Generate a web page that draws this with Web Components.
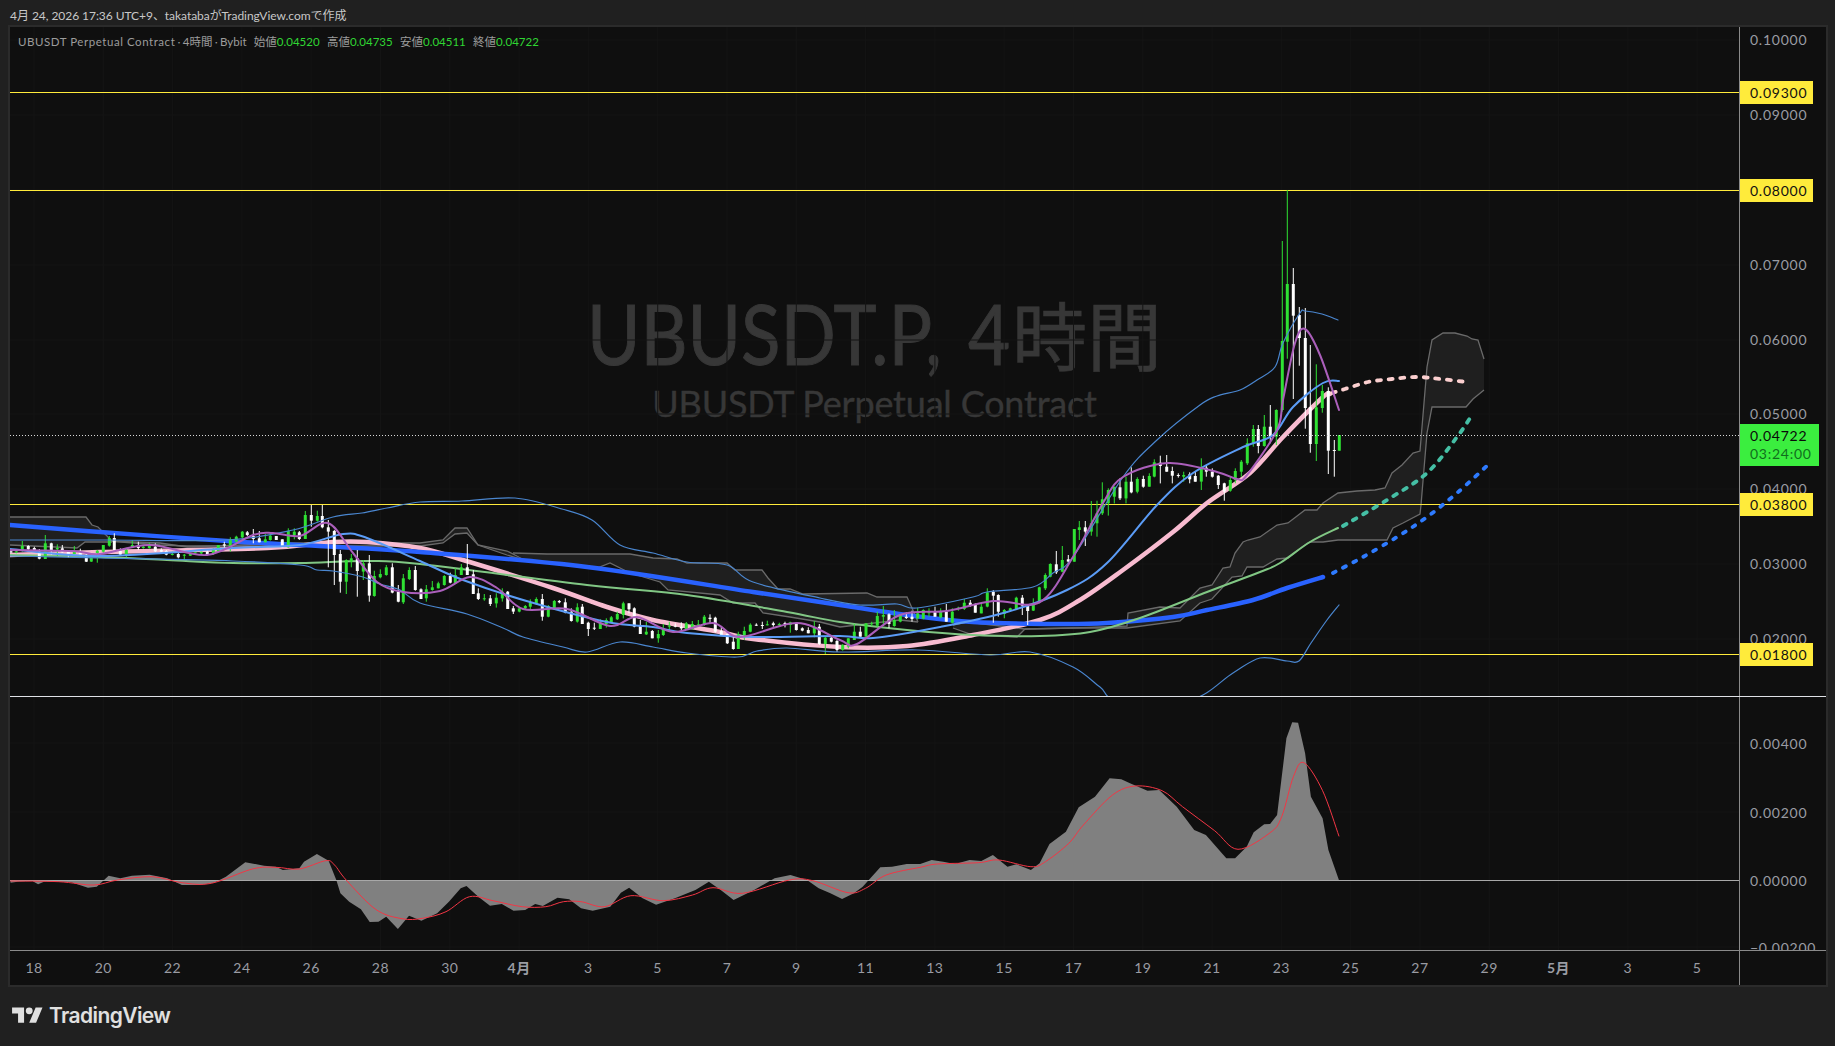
<!DOCTYPE html>
<html lang="ja">
<head>
<meta charset="utf-8">
<title>UBUSDT.P</title>
<style>
  html, body { margin: 0; padding: 0; background: #202020; overflow: hidden; }
</style>
</head>
<body>
<tv-snapshot>
  <tv-header slot="header">4月 24, 2026 17:36 UTC+9、takatabaがTradingView.comで作成</tv-header>
  <tv-chart slot="chart">
    <tv-main-pane slot="main"></tv-main-pane>
    <tv-price-axis slot="main-axis"
      ticks="40:0.10000,115:0.09000,190:0.08000,265:0.07000,340:0.06000,414:0.05000,489:0.04000,564:0.03000,639:0.02000"
      tags="92:0.09300,190:0.08000,504:0.03800,654:0.01800" origin="27"></tv-price-axis>
    <tv-osc-pane slot="osc"></tv-osc-pane>
    <tv-price-axis slot="osc-axis"
      ticks="744:0.00400,813:0.00200,881:0.00000,948:−0.00200" origin="697"></tv-price-axis>
    <tv-time-axis slot="time" labels="18,20,22,24,26,28,30,*4月,3,5,7,9,11,13,15,17,19,21,23,25,27,29,*5月,3,5"></tv-time-axis>
  </tv-chart>
  <tv-brand slot="footer">TradingView</tv-brand>
</tv-snapshot>

<script>
const FONT = `Lato, "Noto Sans CJK JP", sans-serif`;
const TICK_XS = Array.from({ length: 25 }, (_, i) => 34 + 69.3 * i);

// smooth line through hand-read points
function smooth(pts) {
  let d = `M${pts[0][0]} ${pts[0][1]}`;
  for (let i = 0; i < pts.length - 1; i++) {
    const p0 = pts[i - 1] || pts[i], p1 = pts[i], p2 = pts[i + 1], p3 = pts[i + 2] || p2;
    const c1x = p1[0] + (p2[0] - p0[0]) / 6, c1y = p1[1] + (p2[1] - p0[1]) / 6;
    const c2x = p2[0] - (p3[0] - p1[0]) / 6, c2y = p2[1] - (p3[1] - p1[1]) / 6;
    d += `C${c1x.toFixed(1)} ${c1y.toFixed(1)} ${c2x.toFixed(1)} ${c2y.toFixed(1)} ${p2[0]} ${p2[1]}`;
  }
  return d;
}
const straight = pts => "M" + pts.map(p => p.join(" ")).join("L");
const line = (pts, color, w, extra = "") =>
  `<path d="${smooth(pts)}" fill="none" stroke="${color}" stroke-width="${w}" stroke-linejoin="round" stroke-linecap="round" ${extra}/>`;

// zoom crop coords back to page coords
const unzoom = (pts, ox, oy, sx, sy = 3) => pts.map(([u, v]) => [+(ox + u / sx).toFixed(1), +(oy + v / sy).toFixed(1)]);

// side x bodyTop bodyBottom wickTop wickBottom, read from the crops, right to left
const CANDLES = [
  [1200, 170, `g 418 795 842 795 842;w 403 840 843 810 920;w 385 663 842 652 912;g 367 663 714 645 728;g 349 712 822 583 873;w 331 712 822 525 848;w 316 504 714 414 776;w 298 435 504 411 587;w 280 342 437 294 687;g 262 342 515 60 566;g 247 513 720 213 725;g 229 720 800 718 825;w 211 770 800 705 820;g 193 770 828 735 830;w 175 777 828 765 850;g 160 777 822 765 830;g 142 820 880 805 885;g 124 875 905 870 920;g 106 903 930 895 940;g 91 930 962 918 965;w 73 940 965 938 992;w 55 917 945 915 957;w 37 905 920 895 923;w 19 893 905 885 920`],
  [840, 440, `g 1084 85 125 55 150;w 1066 108 125 95 125;w 1049 103 118 97 130;g 1031 105 110 95 125;w 1015 105 108 100 113;w 997 93 107 80 130;w 980 80 95 45 95;w 961 68 78 47 130;g 943 67 110 58 112;g 928 108 140 100 140;w 910 117 140 107 143;g 892 117 155 112 160;w 874 125 157 82 160;g 858 125 175 110 190;w 840 142 175 115 180;g 823 140 170 140 190;g 805 150 190 145 227;g 787 178 220 127 225;g 771 220 250 182 290;g 754 250 275 183 287;w 736 262 275 243 318;g 718 262 270 243 300;g 703 267 365 267 365;w 685 358 365 345 372;g 667 360 395 318 397;w 649 373 397 333 402;g 631 372 410 370 412;g 616 405 445 400 450;g 598 442 485 440 490;g 580 490 512 475 513;w 563 495 513 495 555;w 547 473 497 465 525;g 529 473 508 470 510;g 511 505 512 503 515;g 493 510 522 507 535;w 475 465 515 463 530;w 460 455 467 450 548;g 442 457 500 445 502;g 424 500 520 490 520;w 406 495 518 490 518;w 391 488 497 480 500;g 373 488 507 477 510;g 355 503 507 500 512;g 337 515 548 505 550;w 319 515 545 492 545;g 302 515 532 505 535;w 285 515 530 500 530;g 267 517 520 505 530;g 250 510 536 508 538;g 233 520 535 503 538;w 216 530 537 512 545;w 199 530 534 517 537;g 181 523 545 523 547;g 163 540 558 510 560;w 147 523 552 520 565;g 130 525 530 498 552;g 112 528 557 515 560;g 95 550 553 545 558;g 78 550 590 550 592;w 61 575 590 560 590;g 43 575 600 552 600;g 25 595 620 595 625;g 8 615 630 612 632`],
  [420, 520, `w 1251 363 390 360 396;w 1234 353 365 350 367;g 1216 353 372 350 402;w 1198 320 372 312 375;g 1183 323 340 303 352;w 1165 330 340 322 340;w 1147 325 332 322 334;w 1129 310 330 307 332;g 1111 307 315 305 338;w 1095 309 312 305 322;g 1078 312 315 308 318;w 1060 310 315 305 320;g 1042 313 315 302 316;w 1027 315 318 305 327;w 1009 314 317 310 318;g 991 314 335 310 337;g 973 333 345 320 360;g 955 343 387 335 387;w 940 365 387 347 389;w 922 342 370 340 372;w 904 333 345 322 345;w 886 293 335 290 338;w 870 293 297 283 310;g 853 290 315 285 317;g 835 313 315 300 317;g 817 312 327 303 330;g 799 310 327 306 330;w 784 320 325 307 332;w 766 317 320 310 322;g 748 317 320 305 332;g 730 325 345 312 348;g 715 342 355 330 368;w 697 333 355 330 355;g 679 335 343 305 345;w 661 315 342 300 342;w 643 265 320 262 322;w 627 250 268 250 280;g 610 250 285 245 295;g 592 282 298 275 300;g 574 292 308 288 310;g 559 300 312 295 323;g 541 308 327 298 327;w 523 323 326 308 330;w 505 308 327 305 348;w 487 260 312 252 312;g 472 262 305 250 308;w 454 275 303 265 305;w 436 247 278 235 280;w 418 243 247 240 250;g 403 243 268 240 270;g 385 258 290 255 292;w 367 237 290 222 302;g 349 237 252 232 255;g 331 248 260 238 272;g 316 258 265 255 268;g 298 265 275 262 277;w 280 265 275 258 282;w 263 215 267 213 267;g 247 215 235 205 245;g 229 233 250 220 263;w 211 235 252 225 258;g 193 235 238 222 242;w 175 220 237 205 240;w 160 163 222 150 222;w 142 142 165 72 165;g 124 142 165 132 165;g 106 165 190 145 190;w 91 168 188 158 190;g 73 168 195 165 197;g 55 190 205 185 205;g 37 202 210 183 212;g 19 208 235 195 245;w 3 208 237 205 237`],
  [0, 480, `w 1246 270 330 258 332;g 1228 270 297 262 300;g 1210 295 367 282 372;w 1195 335 365 315 367;w 1177 262 338 250 340;g 1159 262 285 255 287;g 1141 282 292 268 295;g 1123 288 348 272 350;w 1108 250 347 225 365;g 1090 250 275 240 300;w 1072 235 273 210 350;g 1054 235 245 222 262;g 1039 240 305 238 342;w 1021 222 305 210 338;w 1003 153 225 150 315;w 985 142 155 120 262;w 967 108 142 75 145;g 952 108 122 92 125;w 934 105 122 75 140;g 916 105 177 93 177;w 898 157 177 153 180;g 883 155 165 145 178;g 865 153 202 145 203;w 847 178 202 178 202;w 829 168 180 168 180;g 811 167 180 160 182;g 796 178 187 162 187;w 778 175 187 153 187;w 760 168 177 147 190;w 742 157 165 153 168;g 727 155 172 153 174;g 709 170 185 167 187;g 691 177 207 172 215;w 673 193 197 185 207;g 655 195 213 195 215;g 640 208 222 205 225;w 622 215 224 208 226;g 604 215 220 215 222;g 586 217 220 217 224;g 571 222 227 220 228;g 553 224 227 222 240;w 535 222 232 218 235;g 517 222 224 215 226;w 499 213 224 210 226;w 484 210 215 205 216;w 466 200 214 190 216;g 448 198 204 188 206;g 430 200 204 198 206;w 415 196 204 185 210;g 397 195 202 180 204;g 379 210 228 203 232;w 361 213 224 205 228;w 343 174 210 160 210;g 328 174 197 168 200;g 310 195 215 195 218;g 292 212 219 210 248;g 274 226 245 222 246;w 259 224 245 218 246;w 241 216 227 206 228;g 223 215 222 198 222;w 205 214 222 210 233;w 187 205 217 195 218;g 172 204 208 193 228;w 154 190 210 188 225;g 136 190 237 165 237;w 118 215 236 207 238;w 103 204 212 200 216;w 85 198 208 196 212;g 67 198 210 183 215;g 49 214 218 210 220;w 33 214 218 212 218`]
];

const PINK = [[10,555],[100,552],[267,548],[333,542],[367,542],[420,548],[463,560],[553,588],[607,607],[653,620],[720,632],[753,639],[840,647],[907,646],[973,635],[1040,620],[1080,600],[1123,570],[1173,532],[1207,503],[1250,473],[1283,437],[1323,397],[1330,394]];
const PINK_DASH = [[1332,393],[1345,389],[1368,382],[1392,379],[1417,377],[1440,379],[1467,382]];
const BLUE = [[10,525],[100,532],[227,541],[300,545],[420,552],[587,567],[753,592],[840,605],[907,615],[973,622],[1057,624],[1107,623],[1173,617],[1207,610],[1253,600],[1287,588],[1323,577]];
const BLUE_DASH = [[1333,573],[1363,557],[1397,537],[1427,517],[1457,493],[1490,463]];
const GREEN = [[10,555],[100,557],[167,560],[233,563],[300,563],[367,561],[420,564],[587,585],[687,595],[787,612],[840,622],[907,630],[973,635],[1040,636],[1090,632],[1140,618],[1207,592],[1260,572],[1280,563],[1310,542],[1338,528]];
const TEAL_DASH = [[1343,526],[1387,500],[1427,473],[1457,437],[1472,415]];
const MID = [[10,549],[100,556],[233,548],[300,545],[343,534],[367,538],[420,561],[463,580],[530,602],[607,622],[653,627],[687,633],[753,637],[840,636],[873,638],[940,627],[1007,612],[1067,590],[1107,563],[1157,505],[1193,473],[1243,447],[1273,435],[1293,407],[1323,383],[1339,381]];
const UPPER = [[10,540],[107,540],[227,540],[293,530],[333,517],[362,513],[387,508],[420,502],[462,501],[515,498],[562,509],[592,520],[620,545],[653,553],[687,562],[727,565],[753,582],[820,598],[860,605],[897,604],[917,608],[973,597],[987,592],[1033,587],[1053,573],[1073,557],[1123,477],[1157,440],[1200,405],[1217,396],[1240,390],[1257,380],[1275,367],[1283,343],[1300,313],[1305,311],[1322,314],[1338,320]];
const LOWER = [[10,556],[100,558],[233,561],[300,565],[317,570],[333,571],[363,577],[380,584],[400,590],[420,603],[467,614],[503,628],[523,637],[563,647],[587,652],[620,642],[653,647],[687,653],[737,657],[757,651],[787,648],[840,652],[917,650],[990,655],[1030,652],[1073,667],[1100,687],[1118,700],[1190,700],[1233,673],[1260,658],[1287,661],[1299,661],[1311,643],[1327,620],[1339,605]];
const PURPLE = [[10,550],[73,551],[100,554],[150,545],[207,555],[253,535],[273,533],[300,536],[328,523],[353,553],[377,582],[403,592],[440,591],[470,577],[497,588],[523,609],[567,609],[610,626],[637,617],[673,632],[713,623],[740,637],[797,623],[840,640],[857,644],[900,615],[947,611],[993,601],[1040,602],[1073,557],[1103,503],[1123,477],[1168,463],[1217,472],[1237,479],[1247,475],[1277,430],[1283,400],[1295,343],[1305,329],[1320,355],[1339,410]];

// ichimoku cloud pieces: upper edge, lower edge
const CLOUDS = [
  [[[10,517],[86,517],[92,525],[98,527],[108,537],[112,542]], [[10,545],[77,548],[85,542],[112,542]]],
  [[[108,541],[160,543],[187,547],[290,543],[420,543],[443,540],[455,528],[467,528],[478,545],[507,551],[527,561]], [[108,541],[160,545],[187,546],[290,546],[420,546],[443,543],[455,534],[467,533],[478,545],[507,555],[527,561]]],
  [[[513,553],[547,554],[630,554],[653,558],[677,559],[687,563],[727,563],[735,570],[762,570],[768,578],[778,589],[790,589],[803,594],[867,593],[877,597],[907,597],[912,608],[918,622]], [[527,561],[597,568],[610,563],[630,573],[660,582],[668,590],[720,595],[733,603],[755,603],[763,613],[790,617],[820,622],[840,627],[900,620],[918,622]]],
  [[[953,625],[967,622],[1017,628],[1025,629]], [[953,628],[973,635],[1017,637],[1025,629]]],
  [[[1025,629],[1073,628],[1127,626],[1128,613],[1160,607],[1180,608],[1200,588],[1212,585],[1223,568],[1230,567],[1235,553],[1243,542],[1248,540],[1260,537],[1277,525],[1288,523],[1305,510],[1317,510],[1323,503],[1338,493],[1357,491],[1375,490],[1385,488],[1392,473],[1402,465],[1413,453],[1420,451],[1427,367],[1432,340],[1443,333],[1455,333],[1467,336],[1472,339],[1478,340],[1484,359]],
   [[1025,629],[1073,628],[1127,628],[1180,621],[1200,603],[1212,599],[1232,577],[1242,576],[1247,567],[1263,567],[1277,559],[1288,558],[1302,547],[1310,542],[1323,542],[1338,540],[1387,540],[1393,528],[1403,523],[1420,514],[1421,505],[1427,433],[1432,407],[1466,407],[1473,399],[1484,390]]]
];

const OSC_A = [[18,548],[30,545],[55,543],[65,553],[75,545],[120,546],[150,563],[165,560],[185,527],[205,535],[225,527],[255,524],[285,535],[310,555],[340,555],[365,548],[385,530],[418,487],[450,497],[470,500],[482,510],[510,505],[518,485],[540,462],[560,482],[573,540],[580,580],[595,605],[615,628],[630,666],[645,665],[658,650],[678,687],[697,647],[718,662],[745,640],[765,605],[785,565],[795,558],[815,590],[835,617],[855,612],[875,632],[895,630],[912,612],[925,618],[950,593],[970,598],[990,625],[1010,632],[1040,620],[1058,578],[1072,563],[1095,595],[1118,614],[1150,595],[1185,570],[1208,545],[1228,570],[1250,600],[1285,570],[1320,535],[1347,525],[1375,540],[1395,565],[1415,580],[1435,597],[1455,580],[1470,560],[1500,502],[1520,500],[1545,492],[1568,492]];
const OSC_B = [[20,480],[40,485],[60,492],[85,480],[105,483],[125,465],[150,500],[165,493],[190,510],[205,490],[222,432],[250,395],[272,322],[300,290],[325,235],[345,238],[360,250],[390,272],[410,270],[440,320],[470,390],[490,405],[525,475],[540,475],[560,440],[572,397],[590,373],[600,372],[612,345],[628,115],[638,67],[648,68],[660,160],[670,290],[690,355],[700,450],[718,540]];
const RED_A = [[18,543],[100,545],[160,555],[200,540],[260,530],[310,548],[360,550],[430,507],[470,502],[510,507],[555,482],[570,495],[590,540],[640,628],[685,656],[720,655],[760,635],[800,590],[840,602],[890,620],[930,620],[960,605],[990,605],[1030,620],[1075,587],[1130,602],[1180,585],[1215,563],[1265,580],[1345,540],[1385,542],[1445,578],[1475,565],[1510,525],[1568,502]];
const RED_B = [[30,492],[100,488],[135,480],[190,500],[215,485],[255,430],[280,375],[330,285],[370,258],[415,272],[450,320],[505,392],[545,448],[600,398],[620,350],[640,230],[658,188],[690,272],[718,408]];

class TvSnapshot extends HTMLElement {
  constructor() {
    super();
    this.attachShadow({ mode: "open" }).innerHTML = `
      <style>
        :host { display: grid; grid-template-rows: 25px auto 1fr; width: 1835px; height: 1046px; background: #202020; font-family: ${FONT}; }
        .chart { display: block; margin-left: 8px; }
      </style>
      <slot name="header"></slot>
      <div class="chart"><slot name="chart"></slot></div>
      <slot name="footer"></slot>`;
  }
}

class TvHeader extends HTMLElement {
  constructor() {
    super();
    this.attachShadow({ mode: "open" }).innerHTML = `
      <style>
        :host { display: flex; align-items: center; padding: 3px 0 0 10px; box-sizing: border-box; height: 25px; color: #c8c8c8; font-size: 12px; letter-spacing: -0.05px; white-space: nowrap; }
      </style>
      <slot></slot>`;
  }
}

class TvChart extends HTMLElement {
  constructor() {
    super();
    this.attachShadow({ mode: "open" }).innerHTML = `
      <style>
        :host { display: grid; grid-template-columns: 1729px 1px 86px; grid-template-rows: 669px 1px 253px 1px 34px; width: 1816px; border: 2px solid #2b2b2b; background: #0f0f0f; }
        .v { background: #8a8a8a; grid-column: 2; grid-row: 1 / 6; }
        .h1 { grid-column: 1 / 4; grid-row: 2; background: #dfe1e6; z-index: 1; }
        .h2 { grid-column: 1 / 4; grid-row: 4; background: #8a8a8a; z-index: 1; }
        ::slotted([slot=main]) { grid-column: 1; grid-row: 1; }
        ::slotted([slot=main-axis]) { grid-column: 3; grid-row: 1; }
        ::slotted([slot=osc]) { grid-column: 1; grid-row: 3; }
        ::slotted([slot=osc-axis]) { grid-column: 3; grid-row: 3; }
        ::slotted([slot=time]) { grid-column: 1; grid-row: 5; }
      </style>
      <div class="v"></div><div class="h1"></div><div class="h2"></div>
      <slot name="main"></slot><slot name="main-axis"></slot>
      <slot name="osc"></slot><slot name="osc-axis"></slot>
      <slot name="time"></slot>`;
  }
}

class TvMainPane extends HTMLElement {
  constructor() {
    super();
    this.attachShadow({ mode: "open" });
  }

  candles() {
    let out = "";
    for (const [ox, oy, rows] of CANDLES) {
      for (const row of rows.split(";")) {
        const [side, u, bt, bb, wt, wb] = row.split(" ");
        const x = ox + u / 3;
        const y = v => (oy + v / 3).toFixed(1);
        const c = side === "g" ? "#2fe233" : "#fff";
        out += `<rect x="${(x - 0.5).toFixed(1)}" y="${y(wt)}" width="1" height="${((wb - wt) / 3).toFixed(1)}" fill="${c}"/>`;
        out += `<rect x="${(x - 1.5).toFixed(1)}" y="${y(bt)}" width="3" height="${Math.max((bb - bt) / 3, 1).toFixed(1)}" fill="${c}"/>`;
      }
    }
    return out;
  }

  clouds() {
    return CLOUDS.map(([top, bottom]) => `
      <path d="${straight(top.concat([...bottom].reverse()))}Z" fill="#1f1f1f"/>
      <path d="${straight(top)}" fill="none" stroke="#6a6a6a" stroke-width="1.3"/>
      <path d="${straight(bottom)}" fill="none" stroke="#6a6a6a" stroke-width="1.3"/>`).join("");
  }

  connectedCallback() {
    const grid = TICK_XS.map(x => `<path d="M${x} 27V696" stroke="#141414"/>`).join("")
      + [40, 115, 190, 265, 340, 414, 489, 564, 639].map(y => `<path d="M10 ${y}H1739" stroke="#141414"/>`).join("");
    const levels = [92, 190, 504, 654].map(y => `<path d="M10 ${y}.5H1739" stroke="#ffeb3b" stroke-width="1"/>`).join("");
    this.shadowRoot.innerHTML = `
      <style>
        :host { display: block; position: relative; overflow: hidden; height: 669px; }
        svg { position: absolute; inset: 0; display: block; }
        .legend { position: absolute; left: 8px; top: 8px; z-index: 2; font-size: 11.5px; line-height: 14px; color: #9c9c9c; white-space: pre; word-spacing: -0.5px; }
        .legend b { font-weight: 400; color: #2fd633; }
        .legend .name { letter-spacing: 0.55px; word-spacing: 0; }
        .legend .sep { font-size: 7.5px; }
        .mark { position: absolute; left: 0; right: 0; top: 256px; text-align: center; color: #373737; white-space: nowrap; }
        .mark .a { display: flex; justify-content: center; align-items: baseline; font-size: 84px; line-height: 100px; }
        .mark .a .lat { display: block; width: 425px; transform: scaleX(0.866); transform-origin: 0 50%; white-space: pre; word-spacing: 9px; -webkit-text-stroke: 1px #373737; }
        .mark .a .cjk { font-size: 75px; -webkit-text-stroke: 0.6px #373737; }
        .mark .b { font-size: 36px; line-height: 44px; margin-top: -5px; letter-spacing: -0.2px; -webkit-text-stroke: 0.4px #373737; }
      </style>
      <div class="mark"><div class="a"><span class="lat">UBUSDT.P, 4</span><span class="cjk">時間</span></div><div class="b">UBUSDT Perpetual Contract</div></div>
      <svg width="1729" height="669" viewBox="10 27 1729 669">
        ${grid}
        ${this.clouds()}
        ${levels}
        ${line(PINK, "#f8bbd0", 4.5)}
        ${line(PINK_DASH, "#fbcfcf", 3.8, 'stroke-dasharray="4 7.7"')}
        ${line(BLUE, "#2962ff", 4.5)}
        ${line(BLUE_DASH, "#2e7bff", 3.8, 'stroke-dasharray="3 8.5"')}
        ${line(GREEN, "#81c784", 2)}
        ${line(TEAL_DASH, "#45bfa5", 3.8, 'stroke-dasharray="4 7.7"')}
        ${this.candles()}
        ${line(MID, "#5b9cf6", 2)}
        ${line(UPPER, "#4a86cf", 1.2)}
        ${line(LOWER, "#4a86cf", 1.2)}
        ${line(PURPLE, "#ab5fbb", 2)}
        <path d="M10 435.5H1739" stroke="#d8d8d8" stroke-dasharray="1 2"/>
      </svg>
      <div class="legend"><span class="name">UBUSDT Perpetual Contract</span><span class="sep">・</span>4時間<span class="sep">・</span>Bybit   始値<b>0.04520</b>   高値<b>0.04735</b>   安値<b>0.04511</b>   終値<b>0.04722</b></div>`;
  }
}

class TvOscPane extends HTMLElement {
  constructor() {
    super();
    this.attachShadow({ mode: "open" });
  }

  connectedCallback() {
    const a = unzoom(OSC_A, 0, 700, 1.704).concat(unzoom(OSC_B, 920, 700, 1.714));
    const red = unzoom(RED_A, 0, 700, 1.704).concat(unzoom(RED_B, 920, 700, 1.714));
    const grid = TICK_XS.map(x => `<path d="M${x} 697V950" stroke="#141414"/>`).join("")
      + [743, 812, 947].map(y => `<path d="M10 ${y}H1739" stroke="#141414"/>`).join("");
    this.shadowRoot.innerHTML = `
      <style>:host { display: block; height: 253px; } svg { display: block; }</style>
      <svg width="1729" height="253" viewBox="10 697 1729 253">
        ${grid}
        <path d="M10.5 880${straight(a).replace("M", "L")}L1340 880Z" fill="#808080"/>
        <path d="M10 880.5H1739" stroke="#a8a8a8"/>
        ${line(red, "#f23645", 1)}
      </svg>`;
  }
}

class TvPriceAxis extends HTMLElement {
  constructor() {
    super();
    this.attachShadow({ mode: "open" });
  }

  pairs(name) {
    return (this.getAttribute(name) || "").split(",").filter(Boolean).map(s => s.split(":"));
  }

  connectedCallback() {
    const origin = +this.getAttribute("origin");
    const ticks = this.pairs("ticks").map(([y, t]) =>
      `<div class="tick" style="top:${y - origin - 11}px">${t}</div>`).join("");
    const tags = this.pairs("tags").map(([y, t]) =>
      `<div class="tag" style="top:${y - origin - 11}px">${t}</div>`).join("");
    const last = origin === 27
      ? `<div class="last" style="top:${424 - origin}px"><div>0.04722</div><div class="cd">03:24:00</div></div>` : "";
    this.shadowRoot.innerHTML = `
      <style>
        :host { display: block; position: relative; overflow: hidden; font-size: 14px; letter-spacing: 0.75px; }
        .tick, .tag { position: absolute; left: 0; height: 23px; line-height: 22px; padding-left: 10px; color: #9a9ca3; white-space: nowrap; }
        .tag { width: 63px; line-height: 23px; background: #ffeb3b; color: #111; }
        .last { position: absolute; left: 0; width: 79px; height: 42px; box-sizing: border-box; padding: 3px 0 0 10px; background: #3bee3f; color: #0a0a0a; line-height: 18px; }
        .cd { color: #106e1d; }
      </style>
      ${ticks}${tags}${last}`;
  }
}

class TvTimeAxis extends HTMLElement {
  constructor() {
    super();
    this.attachShadow({ mode: "open" });
  }

  connectedCallback() {
    const labels = this.getAttribute("labels").split(",").map(t =>
      t[0] === "*" ? `<span class="month">${t.slice(1)}</span>` : `<span>${t}</span>`).join("");
    this.shadowRoot.innerHTML = `
      <style>
        :host { display: flex; align-items: center; box-sizing: border-box; height: 34px; padding-bottom: 2px; overflow: hidden; color: #9a9ca3; font-size: 14px; letter-spacing: 0.5px; }
        span { flex: 0 0 69.3px; text-align: center; }
        span:first-of-type { margin-left: -10.65px; }
        .month { font-weight: 700; }
      </style>
      ${labels}`;
  }
}

class TvBrand extends HTMLElement {
  constructor() {
    super();
    this.attachShadow({ mode: "open" }).innerHTML = `
      <style>
        :host { display: flex; align-items: center; gap: 6px; height: 57px; padding: 0 0 0 12px; color: #e0e0e0; font: 600 21px Inter, ${FONT}; letter-spacing: -0.6px; }
        svg { display: block; flex: none; }
      </style>
      <svg width="31" height="24" viewBox="0 0 36 28" fill="#e0e0e0"><path d="M14 22H7V11H0V4h14v18zM28 22h-8l7.5-18h8L28 22z"/><circle cx="20" cy="8" r="4"/></svg>
      <slot></slot>`;
  }
}

customElements.define("tv-snapshot", TvSnapshot);
customElements.define("tv-header", TvHeader);
customElements.define("tv-chart", TvChart);
customElements.define("tv-main-pane", TvMainPane);
customElements.define("tv-osc-pane", TvOscPane);
customElements.define("tv-price-axis", TvPriceAxis);
customElements.define("tv-time-axis", TvTimeAxis);
customElements.define("tv-brand", TvBrand);
</script>
</body>
</html>
